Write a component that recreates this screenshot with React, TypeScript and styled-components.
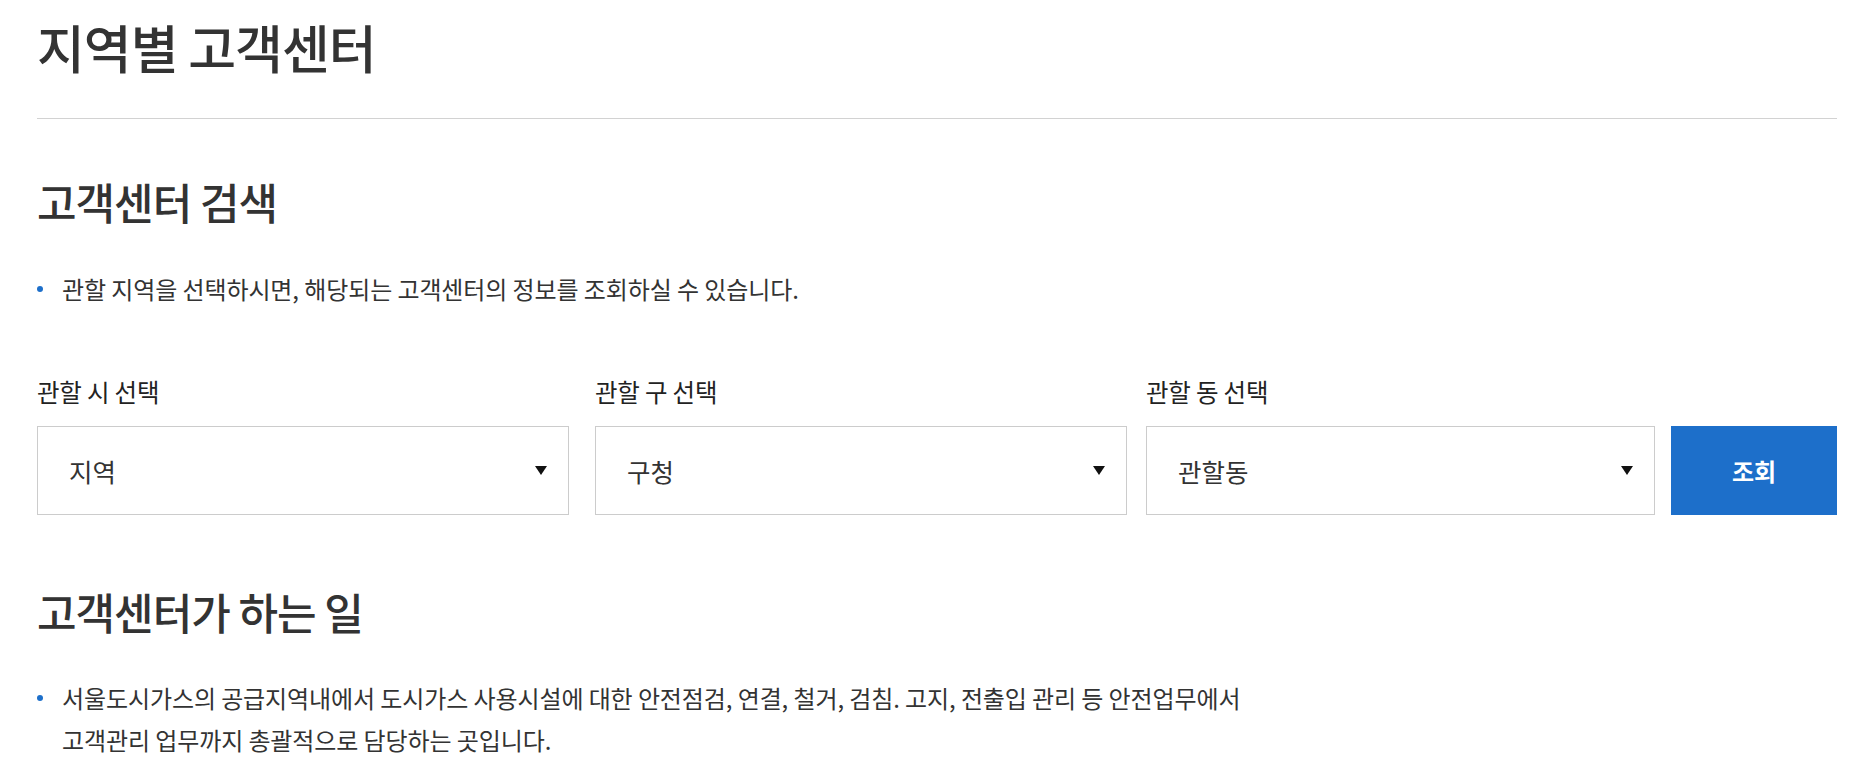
import React from "react";
import styled, { createGlobalStyle } from "styled-components";

const GlobalStyle = createGlobalStyle`
  html, body {
    margin: 0;
    padding: 0;
    background: #ffffff;
  }
  body {
    font-family: "Noto Sans CJK KR", "Noto Sans", sans-serif;
    color: #333333;
  }
  * { box-sizing: border-box; }
`;

const Page = styled.main`
  width: 1800px;
  margin-left: 37px;
  padding-bottom: 20px;
`;

const PageTitle = styled.h1`
  margin: 17px 0 0;
  font-size: 52px;
  line-height: 60px;
  font-weight: 500;
  letter-spacing: -1px;
  color: #333333;
`;

const Divider = styled.hr`
  margin: 41px 0 0;
  border: 0;
  border-top: 1px solid #d2d2d2;
  height: 0;
`;

const SectionTitle = styled.h2<{ $top: number }>`
  margin: ${(p) => p.$top}px 0 0;
  font-size: 43px;
  line-height: 50px;
  font-weight: 500;
  letter-spacing: -1px;
  color: #333333;
`;

const BulletList = styled.ul<{ $top: number }>`
  list-style: none;
  margin: ${(p) => p.$top}px 0 0;
  padding: 0;
`;

const BulletItem = styled.li`
  position: relative;
  padding-left: 25px;
  font-size: 24px;
  line-height: 42px;
  color: #333333;
  letter-spacing: -0.1px;

  &::before {
    content: "";
    position: absolute;
    left: 0;
    top: 18px;
    width: 6px;
    height: 6px;
    border-radius: 50%;
    background: #1d6fca;
  }
`;

const SearchForm = styled.form`
  display: flex;
  align-items: flex-end;
  margin-top: 67px;
`;

const Field = styled.div<{ $width: number; $gap: number }>`
  display: flex;
  flex-direction: column;
  width: ${(p) => p.$width}px;
  margin-right: ${(p) => p.$gap}px;
`;

const Label = styled.label`
  font-size: 24.5px;
  line-height: 30px;
  color: #222222;
  margin-bottom: 19px;
  letter-spacing: -0.2px;
`;

const SelectBox = styled.div`
  display: flex;
  align-items: center;
  justify-content: space-between;
  height: 89px;
  padding: 0 21px 0 31px;
  border: 1px solid #cccccc;
  background: #ffffff;
  font-size: 25.5px;
  color: #333333;
  cursor: pointer;
`;

const SearchButton = styled.button`
  width: 166px;
  height: 89px;
  border: 0;
  background: #1d6fca;
  color: #ffffff;
  font-family: inherit;
  font-size: 24px;
  font-weight: 700;
  cursor: pointer;
`;

const Arrow = () => (
  <svg width="12" height="9" viewBox="0 0 12 9" aria-hidden="true">
    <path d="M0 0 H12 L6 9 Z" fill="#111111" />
  </svg>
);

const fields = [
  { label: "관할 시 선택", value: "지역", width: 532, gap: 26 },
  { label: "관할 구 선택", value: "구청", width: 532, gap: 19 },
  { label: "관할 동 선택", value: "관할동", width: 509, gap: 16 },
];

export default function App() {
  return (
    <>
      <GlobalStyle />
      <Page>
        <PageTitle>지역별 고객센터</PageTitle>
        <Divider />

        <SectionTitle $top={57}>고객센터 검색</SectionTitle>
        <BulletList $top={42}>
          <BulletItem>
            관할 지역을 선택하시면, 해당되는 고객센터의 정보를 조회하실 수 있습니다.
          </BulletItem>
        </BulletList>

        <SearchForm onSubmit={(e) => e.preventDefault()}>
          {fields.map((f) => (
            <Field key={f.label} $width={f.width} $gap={f.gap}>
              <Label>{f.label}</Label>
              <SelectBox role="combobox">
                <span>{f.value}</span>
                <Arrow />
              </SelectBox>
            </Field>
          ))}
          <SearchButton type="submit">조회</SearchButton>
        </SearchForm>

        <SectionTitle $top={71}>고객센터가 하는 일</SectionTitle>
        <BulletList $top={41}>
          <BulletItem>
            서울도시가스의 공급지역내에서 도시가스 사용시설에 대한 안전점검, 연결, 철거, 검침. 고지, 전출입 관리 등 안전업무에서
            <br />
            고객관리 업무까지 총괄적으로 담당하는 곳입니다.
          </BulletItem>
        </BulletList>
      </Page>
    </>
  );
}
